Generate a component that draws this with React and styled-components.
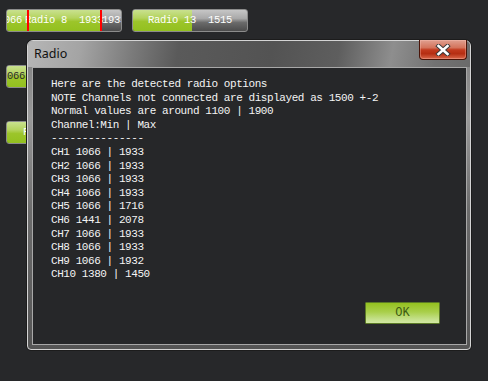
import React from "react";
import styled, { createGlobalStyle } from "styled-components";

const GlobalStyle = createGlobalStyle`
  html, body { margin: 0; padding: 0; background: #27282a; overflow: hidden; }
  #root { width: 488px; height: 381px; }
`;

const Desktop = styled.div`
  position: relative;
  width: 488px;
  height: 381px;
  box-sizing: border-box;
  padding: 9px 6px;
  display: flex;
  flex-direction: column;
  gap: 33px;
  background: #27282a;
`;

const ButtonRow = styled.div`
  display: flex;
  gap: 10px;
`;

const ChannelButton = styled.div`
  position: relative;
  width: 116px;
  height: 23px;
  box-sizing: border-box;
  border: 1px solid #8c8c8c;
  border-radius: 3px;
  overflow: hidden;
  background: linear-gradient(#c6c6c6 0%, #a9a9a9 40%, #6a6a6a 60%, #4c4c4c 100%);
  font-family: "Liberation Mono", "DejaVu Sans Mono", monospace;
  font-size: 10.5px;
  letter-spacing: -0.3px;
  color: ${(p) => p.$ink || "#ffffff"};
`;

const Fill = styled.div`
  position: absolute;
  left: 0;
  top: 0;
  bottom: 0;
  background: linear-gradient(#c9e18f 0%, #b4d35e 38%, #9cc52a 55%, #93c01f 100%);
`;

const CenterLabel = styled.div`
  position: absolute;
  inset: 0;
  display: flex;
  align-items: center;
  justify-content: center;
  white-space: pre;
  padding-bottom: 1px;
`;

const EdgeLabel = styled.div`
  position: absolute;
  top: 0;
  bottom: 0;
  display: flex;
  align-items: center;
  white-space: pre;
  padding-bottom: 1px;
`;

const Marker = styled.div`
  position: absolute;
  top: 0;
  bottom: 0;
  width: 2px;
  background: #ff0000;
`;

const Window = styled.div`
  position: absolute;
  left: 27px;
  top: 40px;
  width: 444px;
  height: 310px;
  box-sizing: border-box;
  display: flex;
  flex-direction: column;
  border: 1px solid #d4d4d4;
  border-radius: 6px 6px 4px 4px;
  box-shadow: 0 0 0 1px #1c1c1c;
  background: linear-gradient(180deg, #7c7c7c 0%, #9a9a9a 25%, #6c6c6c 55%, #555555 100%);
`;

const TitleBar = styled.div`
  position: relative;
  height: 26px;
  flex: none;
  display: flex;
  align-items: center;
  padding: 0 0 2px 6px;
  box-sizing: border-box;
  border-radius: 5px 5px 0 0;
  background: linear-gradient(100deg, #b6b6b6 0%, #a4a4a4 12%, #7a7a7a 24%, #5a5a5a 34%, #535353 55%, #5e5e5e 70%, #8e8e8e 82%, #727272 92%, #6a6a6a 100%);
`;

const Title = styled.span`
  font-family: "Noto Sans", "Open Sans", sans-serif;
  font-size: 12.5px;
  color: #111111;
`;

const CloseButton = styled.div`
  position: absolute;
  top: -1px;
  right: 3px;
  width: 48px;
  height: 20px;
  box-sizing: border-box;
  border: 1px solid #4a1408;
  border-top: none;
  border-radius: 0 0 4px 4px;
  display: flex;
  align-items: center;
  justify-content: center;
  background: linear-gradient(#e0a090 0%, #d4745c 40%, #c23a1e 52%, #b52d12 72%, #d9674a 100%);
  box-shadow: inset 0 0 0 1px rgba(255, 200, 190, 0.35);
`;

const Body = styled.div`
  flex: 1;
  display: flex;
  padding: 0 3px 4px 4px;
`;

const Content = styled.div`
  flex: 1;
  display: flex;
  flex-direction: column;
  border: 1px solid #a8a8a8;
  background: #262729;
`;

const Output = styled.pre`
  margin: 0;
  padding: 10px 0 0 18px;
  font-family: "Liberation Mono", "DejaVu Sans Mono", monospace;
  font-size: 11px;
  letter-spacing: -0.43px;
  line-height: 13.6px;
  color: #f4f4f4;
  white-space: pre;
`;

const Footer = styled.div`
  margin-top: auto;
  display: flex;
  justify-content: flex-end;
  padding: 0 26px 20px 0;
`;

const OkButton = styled.button`
  width: 75px;
  height: 22px;
  box-sizing: border-box;
  border: 1px solid #5b7a26;
  border-radius: 1px;
  background: linear-gradient(#94c11f 0%, #a9cf4b 45%, #c4e08a 80%, #d2e8a3 100%);
  font-family: "Liberation Mono", "DejaVu Sans Mono", monospace;
  font-size: 12px;
  color: #3c5a12;
  padding: 0;
  cursor: pointer;
`;

const lines = [
  "Here are the detected radio options",
  "NOTE Channels not connected are displayed as 1500 +-2",
  "Normal values are around 1100 | 1900",
  "Channel:Min | Max",
  "---------------",
  "CH1 1066 | 1933",
  "CH2 1066 | 1933",
  "CH3 1066 | 1933",
  "CH4 1066 | 1933",
  "CH5 1066 | 1716",
  "CH6 1441 | 2078",
  "CH7 1066 | 1933",
  "CH8 1066 | 1933",
  "CH9 1066 | 1932",
  "CH10 1380 | 1450",
];

function CloseGlyph() {
  return (
    <svg width="16" height="12" viewBox="0 0 16 12">
      <path d="M3.5 2 L12.5 10 M12.5 2 L3.5 10" stroke="#3a3a3a" strokeWidth="4.4" strokeLinecap="square" />
      <path d="M3.5 2 L12.5 10 M12.5 2 L3.5 10" stroke="#ffffff" strokeWidth="2.6" strokeLinecap="square" />
    </svg>
  );
}

export default function App() {
  return (
    <>
      <GlobalStyle />
      <Desktop>
        <ButtonRow>
          <ChannelButton>
            <Fill style={{ width: 94 }} />
            <EdgeLabel style={{ right: 99 }}>1066</EdgeLabel>
            <CenterLabel>{"Radio 8  1933"}</CenterLabel>
            <EdgeLabel style={{ left: 95 }}>1933</EdgeLabel>
            <Marker style={{ left: 20 }} />
            <Marker style={{ left: 93 }} />
          </ChannelButton>
          <ChannelButton>
            <Fill style={{ width: 59 }} />
            <CenterLabel>{"Radio 13  1515"}</CenterLabel>
          </ChannelButton>
        </ButtonRow>
        <ButtonRow>
          <ChannelButton $ink="#2a2a2a">
            <Fill style={{ width: 114 }} />
            <EdgeLabel style={{ left: -6 }}>{"1066 1933"}</EdgeLabel>
          </ChannelButton>
          <ChannelButton>
            <Fill style={{ width: 80 }} />
            <CenterLabel>{"Radio 2  1500"}</CenterLabel>
          </ChannelButton>
        </ButtonRow>
        <ButtonRow>
          <ChannelButton>
            <Fill style={{ width: 114 }} />
            <EdgeLabel style={{ left: 16 }}>{"Flight Mode"}</EdgeLabel>
          </ChannelButton>
        </ButtonRow>

        <Window>
          <TitleBar>
            <Title>Radio</Title>
            <CloseButton>
              <CloseGlyph />
            </CloseButton>
          </TitleBar>
          <Body>
            <Content>
              <Output>{lines.join("\n")}</Output>
              <Footer>
                <OkButton>OK</OkButton>
              </Footer>
            </Content>
          </Body>
        </Window>
      </Desktop>
    </>
  );
}
